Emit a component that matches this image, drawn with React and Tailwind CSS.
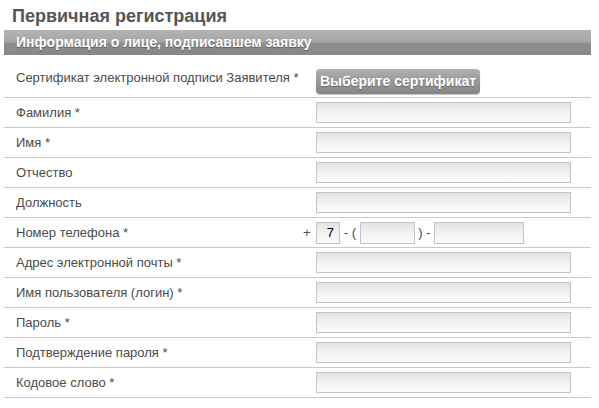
const fields = [
  'Фамилия *',
  'Имя *',
  'Отчество',
  'Должность',
  'PHONE',
  'Адрес электронной почты *',
  'Имя пользователя (логин) *',
  'Пароль *',
  'Подтверждение пароля *',
  'Кодовое слово *',
];

const inputCls =
  'border border-[#c4c4c4] bg-[linear-gradient(to_bottom,#e3e3e3_0%,#f4f4f4_60%,#fbfbfb_100%)] outline-none';

const Field = ({ label }) => {
  if (label === 'PHONE') {
    return (
      <div className="flex h-[30px] items-center border-b border-[#c9c9c9]">
        <div className="w-[299px] pl-3">Номер телефона *</div>
        <span className="w-[13px]">+</span>
        <div className={`${inputCls} flex h-[22px] w-[24px] items-center justify-end pr-[5px] text-[13px] text-black`}>7</div>
        <span className="flex w-[20px] justify-center whitespace-pre">- (</span>
        <div className={`${inputCls} h-[22px] w-[55px]`} />
        <span className="flex w-[19px] justify-center whitespace-pre">) -</span>
        <div className={`${inputCls} h-[22px] w-[90px]`} />
      </div>
    );
  }
  return (
    <div className="flex h-[30px] items-center border-b border-[#c9c9c9]">
      <div className="w-[312px] pl-3">{label}</div>
      <div className={`${inputCls} h-[21px] w-[255px]`} />
    </div>
  );
};

const App = () => {
  return (
    <div
      className="h-[408px] w-[599px] bg-white text-[13px] text-[#4b4b4b]"
      style={{ fontFamily: '"Liberation Sans", Arial, sans-serif' }}
    >
      <div className="h-[30px] pl-3 pt-[5px] text-[18px] font-bold leading-[22px] text-[#555]">
        Первичная регистрация
      </div>
      <div className="mx-1 w-[587px]">
        <div className="flex h-[25px] items-center bg-[linear-gradient(to_bottom,#b3b3b3_0%,#a6a6a6_48%,#8d8d8d_52%,#878787_100%)] pl-3 text-[14px] font-bold text-white [text-shadow:0_1px_1px_rgba(0,0,0,0.35)]">
          Информация о лице, подписавшем заявку
        </div>
        <div className="flex h-[43px] items-center border-b border-[#c9c9c9] pt-1">
          <div className="w-[312px] pl-3">Сертификат электронной подписи Заявителя *</div>
          <button className="mt-[6px] h-[25px] w-[164px] rounded-[4px] bg-[linear-gradient(to_bottom,#b0b0b0_0%,#9a9a9a_50%,#858585_100%)] text-[14px] font-bold text-white shadow-[0_1px_1px_rgba(0,0,0,0.25)] [text-shadow:0_1px_1px_rgba(0,0,0,0.3)]">
            Выберите сертификат
          </button>
        </div>
        {fields.map((f) => (
          <Field key={f} label={f} />
        ))}
      </div>
    </div>
  );
};

export default App;
